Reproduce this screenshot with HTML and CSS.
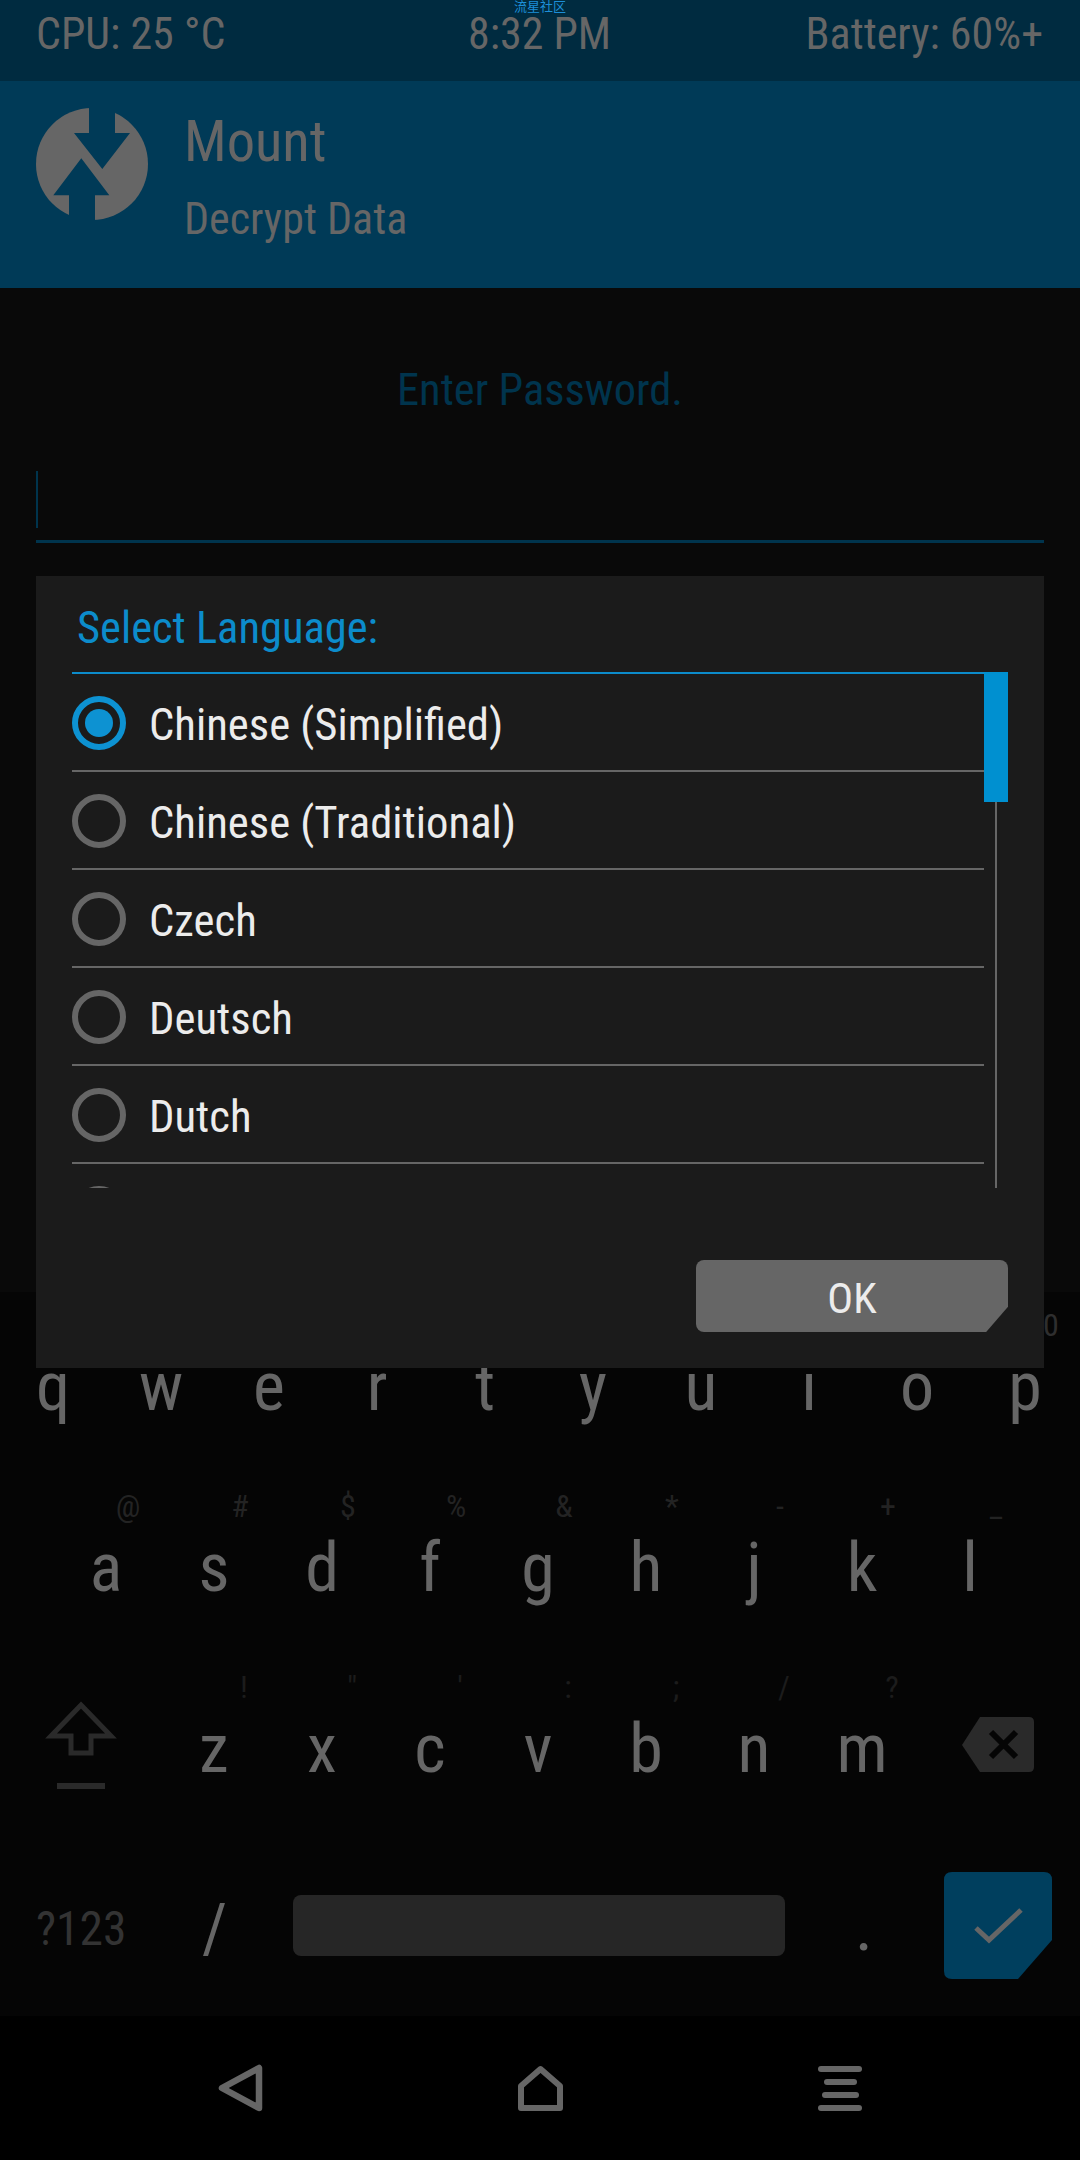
FILE: index.html
```html
<!DOCTYPE html>
<html>
<head>
    <title>TWRP</title>
    <meta charset="UTF-8">
    <link rel="stylesheet" href="styles.css">
</head>
<body>
    <div class="screen">
        <div class="status-bar">
            <span class="watermark">流星社区</span>
            <span class="status-text status-left">CPU: 25 °C</span>
            <span class="status-text status-mid">8:32 PM</span>
            <span class="status-text status-right">Battery: 60%+</span>
        </div>

        <div class="header">
            <svg class="logo" width="112" height="112" viewBox="36 108 112 112">
                <circle cx="92" cy="164" r="56" fill="#666"/>
                <polygon points="89,100 115,100 115,133 130,133 102.3,169 74,133 89,133" fill="#003a57"/>
                <polygon points="81.3,158.3 109.3,195.3 95,195.3 95,224 69,224 69,195.3 53.3,195.3" fill="#003a57"/>
            </svg>
            <div class="header-text">
                <div class="header-title">Mount</div>
                <div class="header-sub">Decrypt Data</div>
            </div>
        </div>

        <div class="main">
            <div class="prompt">Enter Password.</div>
            <div class="password-field"><div class="cursor"></div></div>
        </div>

        <div class="keyboard">
            <div class="key-row row-top">
                <div class="key">q</div>
                <div class="key">w</div>
                <div class="key">e</div>
                <div class="key">r</div>
                <div class="key">t</div>
                <div class="key">y</div>
                <div class="key">u</div>
                <div class="key">i</div>
                <div class="key">o</div>
                <div class="key"><span class="hint">0</span>p</div>
            </div>
            <div class="key-row row-mid">
                <div class="key"><span class="hint hint-wide">@</span>a</div>
                <div class="key"><span class="hint">#</span>s</div>
                <div class="key"><span class="hint">$</span>d</div>
                <div class="key"><span class="hint">%</span>f</div>
                <div class="key"><span class="hint">&amp;</span>g</div>
                <div class="key"><span class="hint">*</span>h</div>
                <div class="key"><span class="hint">-</span>j</div>
                <div class="key"><span class="hint">+</span>k</div>
                <div class="key"><span class="hint">_</span>l</div>
            </div>
            <div class="key-row row-low">
                <svg class="shift" width="72" height="88" viewBox="0 0 72 88">
                    <path d="M36 4 L66 35 H46 V52 H26 V35 H6 Z" fill="none" stroke="#2a2a2a" stroke-width="5"/>
                    <rect x="12" y="82" width="48" height="6" fill="#2a2a2a"/>
                </svg>
                <div class="key"><span class="hint">!</span>z</div>
                <div class="key"><span class="hint">"</span>x</div>
                <div class="key"><span class="hint">'</span>c</div>
                <div class="key"><span class="hint">:</span>v</div>
                <div class="key"><span class="hint">;</span>b</div>
                <div class="key"><span class="hint">/</span>n</div>
                <div class="key"><span class="hint">?</span>m</div>
                <svg class="backspace" width="72" height="55" viewBox="0 0 72 55">
                    <path d="M18 0 H67 Q72 0 72 5 V50 Q72 55 67 55 H18 L0 28 Z" fill="#2a2a2a"/>
                    <path d="M29 15 L54 40 M54 15 L29 40" stroke="#050505" stroke-width="6"/>
                </svg>
            </div>
            <div class="key-row row-bottom">
                <span class="symbols">?123</span>
                <span class="slash">/</span>
                <div class="spacebar"></div>
                <span class="dot">.</span>
                <svg class="enter" width="108" height="107" viewBox="0 0 108 107">
                    <path d="M8 0 H100 Q108 0 108 8 V68 L74 107 H8 Q0 107 0 99 V8 Q0 0 8 0 Z" fill="#003f5e"/>
                    <path d="M32 56 L45 68 L77 38" fill="none" stroke="#666" stroke-width="5"/>
                </svg>
            </div>
        </div>

        <div class="nav-bar">
            <svg width="45" height="48" viewBox="0 0 45 48">
                <path d="M41 4 V44 L4 24 Z" fill="none" stroke="#666" stroke-width="6.5" stroke-linejoin="round"/>
            </svg>
            <svg width="45" height="46" viewBox="0 0 45 46">
                <path d="M22.5 4 L42 21 V43 H3 V21 Z" fill="none" stroke="#666" stroke-width="6" stroke-linejoin="round"/>
            </svg>
            <div class="menu-icon">
                <div class="menu-bar"></div>
                <div class="menu-bar menu-short"></div>
                <div class="menu-bar menu-mid"></div>
                <div class="menu-bar"></div>
            </div>
        </div>

        <div class="dialog">
            <div class="dialog-title">Select Language:</div>
            <div class="list-wrap">
                <div class="list">
                    <div class="list-item"><span class="radio radio-on"></span><span class="item-name">Chinese (Simplified)</span></div>
                    <div class="list-item"><span class="radio"></span><span class="item-name">Chinese (Traditional)</span></div>
                    <div class="list-item"><span class="radio"></span><span class="item-name">Czech</span></div>
                    <div class="list-item"><span class="radio"></span><span class="item-name">Deutsch</span></div>
                    <div class="list-item"><span class="radio"></span><span class="item-name">Dutch</span></div>
                    <div class="list-item"><span class="radio"></span></div>
                </div>
                <div class="scrollbar"><div class="scroll-thumb"></div></div>
            </div>
            <div class="dialog-footer">
                <div class="ok-button">OK</div>
            </div>
        </div>
    </div>
</body>
</html>
```

FILE: styles.css
```css
body {
    margin: 0;
    background: #000;
    font-family: "Roboto Condensed", Roboto, "Noto Sans CJK SC", sans-serif;
    font-stretch: 85%;
}

.screen {
    width: 1080px;
    height: 2160px;
    position: relative;
    overflow: hidden;
    display: flex;
    flex-direction: column;
}

/* status bar */
.status-bar {
    height: 81px;
    flex: none;
    position: relative;
    background: #002b40;
    display: grid;
    grid-template-columns: 1fr auto 1fr;
    padding: 0 37px 0 36px;
    color: #666;
    font-size: 44px;
    line-height: 68px;
}

.status-mid {
    text-align: center;
}

.status-right {
    text-align: right;
}

.watermark {
    position: absolute;
    top: 0;
    left: 0;
    width: 100%;
    text-align: center;
    font-size: 13px;
    line-height: 14px;
    color: #1d8fd8;
}

/* header */
.header {
    height: 207px;
    flex: none;
    background: #003a57;
    display: flex;
    padding: 27px 0 0 36px;
    box-sizing: border-box;
}

.header-text {
    margin-left: 36px;
}

.header-title {
    font-size: 56.5px;
    color: #666;
    line-height: 66px;
    margin-top: 1px;
}

.header-sub {
    font-size: 44px;
    color: #666;
    line-height: 50px;
    margin-top: 19px;
}

/* password */
.main {
    height: 1004px;
    flex: none;
    background: #090909;
    padding: 77px 36px 0;
    box-sizing: border-box;
}

.prompt {
    text-align: center;
    font-size: 44.5px;
    line-height: 50px;
    color: #00344d;
}

.password-field {
    margin-top: 56px;
    height: 69px;
    border-bottom: 3px solid #00344d;
}

.cursor {
    width: 2px;
    height: 57px;
    background: #00344d;
}

/* keyboard */
.keyboard {
    height: 724px;
    flex: none;
    background: #050505;
}

.key-row {
    height: 181px;
    display: flex;
}

.row-top {
    margin-left: -1px;
}

.row-mid {
    padding-left: 52px;
}

.row-low {
    position: relative;
    padding-left: 160px;
}

.key {
    width: 108px;
    position: relative;
    box-sizing: border-box;
    padding-top: 55px;
    text-align: center;
    font-size: 68px;
    line-height: 80px;
    color: #666;
}

.hint {
    position: absolute;
    top: 17px;
    left: 80px;
    transform: translateX(-50%);
    font-size: 32px;
    line-height: 32px;
    color: #232323;
}

.hint-wide {
    left: 76px;
}

.row-top .hint {
    color: #2e2e2e;
}

.row-low .hint {
    left: 84px;
    color: #1c1c1c;
}

.shift {
    position: absolute;
    left: 45px;
    top: 47px;
}

.backspace {
    position: absolute;
    left: 962px;
    top: 63px;
}

.row-bottom {
    position: relative;
    align-items: flex-start;
}

.symbols {
    position: absolute;
    left: 36px;
    top: 67px;
    font-size: 47.5px;
    line-height: 54px;
    color: #333;
}

.slash {
    position: absolute;
    left: 202px;
    top: 54px;
    font-size: 68px;
    line-height: 80px;
    color: #666;
}

.spacebar {
    position: absolute;
    left: 293px;
    top: 60px;
    width: 492px;
    height: 61px;
    background: #262626;
    border-radius: 8px;
}

.dot {
    position: absolute;
    left: 855px;
    top: 52px;
    font-size: 68px;
    line-height: 80px;
    color: #666;
}

.enter {
    position: absolute;
    left: 944px;
    top: 37px;
}

/* nav bar */
.nav-bar {
    height: 144px;
    flex: none;
    background: #000;
    position: relative;
    display: flex;
    align-items: center;
    justify-content: space-between;
    padding: 0 218px;
}

.menu-icon {
    width: 44px;
    display: flex;
    flex-direction: column;
    align-items: center;
    gap: 7px;
}

.menu-bar {
    width: 44px;
    height: 6px;
    border-radius: 3px;
    background: #666;
}

.menu-short {
    width: 33px;
}

.menu-mid {
    width: 37px;
}

/* language dialog */
.dialog {
    position: absolute;
    left: 36px;
    top: 576px;
    width: 1008px;
    height: 792px;
    background: #1b1b1b;
    box-sizing: border-box;
    padding: 0 36px;
    display: flex;
    flex-direction: column;
}

.dialog-title {
    height: 96px;
    padding: 27px 0 0 5px;
    box-sizing: border-box;
    font-size: 44.5px;
    line-height: 50px;
    color: #0c8ccb;
}

.list-wrap {
    display: flex;
    height: 516px;
    flex: none;
}

.list {
    width: 912px;
    height: 516px;
    overflow: hidden;
    border-top: 2px solid #0c8ccb;
    box-sizing: border-box;
}

.list-item {
    height: 98px;
    box-sizing: border-box;
    display: flex;
    align-items: center;
    border-bottom: 2px solid #666;
    padding-top: 2px;
}

.radio {
    width: 54px;
    height: 54px;
    box-sizing: border-box;
    border: 6px solid #666;
    border-radius: 50%;
    display: flex;
    align-items: center;
    justify-content: center;
    flex: none;
}

.radio-on {
    border-color: #0d92d2;
}

.radio-on::after {
    content: '';
    width: 28px;
    height: 28px;
    border-radius: 50%;
    background: #0d92d2;
}

.item-name {
    margin-left: 23px;
    padding-top: 4px;
    font-size: 44.7px;
    color: #ececec;
}

.scrollbar {
    width: 24px;
    position: relative;
    display: flex;
    justify-content: center;
}

.scrollbar::before {
    content: '';
    width: 2px;
    background: #666;
}

.scroll-thumb {
    position: absolute;
    top: 0;
    left: 0;
    width: 24px;
    height: 130px;
    background: #0090d0;
}

.dialog-footer {
    display: flex;
    justify-content: flex-end;
    padding-top: 72px;
}

.ok-button {
    width: 312px;
    height: 72px;
    background: #666;
    color: #ececec;
    text-align: center;
    font-size: 43px;
    line-height: 76px;
    border-radius: 8px;
    clip-path: polygon(0 0, 100% 0, 100% 65%, 93% 100%, 0 100%);
}
```
